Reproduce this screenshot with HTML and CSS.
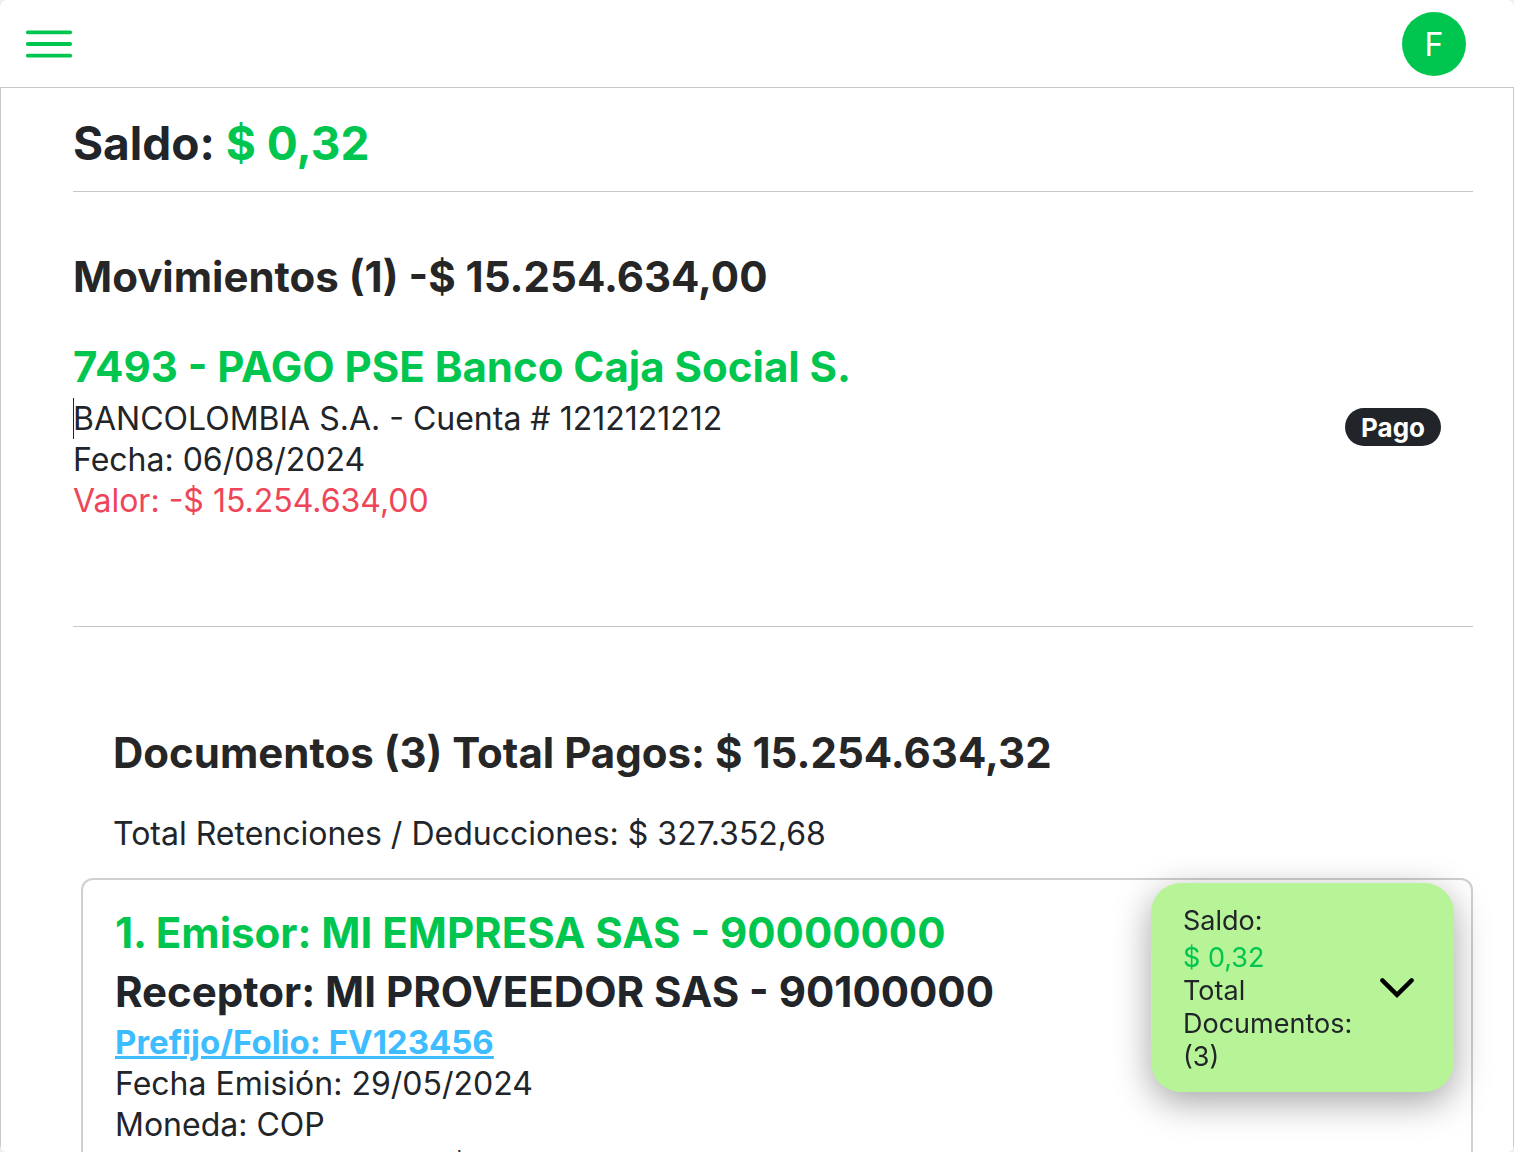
FILE: index.html
```
<!DOCTYPE html>
<html lang="es">
<head>
    <meta charset="UTF-8">
    <meta name="viewport" content="width=device-width, initial-scale=1.0">
    <title>Saldo</title>
    <link rel="stylesheet" href="styles.css">
</head>
<body>

    <div class="app">
        <header class="topbar">
            <button type="button" class="menu-button" aria-label="Menú">
                <svg width="48" height="30" viewBox="0 0 48 30" fill="none" stroke="currentColor" stroke-width="3.8" stroke-linecap="round">
                    <path d="M2.8 3.3H45.2M2.8 15H45.2M2.8 26.7H45.2"/>
                </svg>
            </button>
            <button type="button" class="avatar">F</button>
        </header>

        <main class="content">
            <h1 class="balance">Saldo: <span class="green">$ 0,32</span></h1>

            <section class="movements">
                <h2 class="title">Movimientos (1) -$ 15.254.634,00</h2>
                <div class="movement">
                    <div class="movement-info">
                        <h3 class="title green">7493 - PAGO PSE Banco Caja Social S.</h3>
                        <p class="account">BANCOLOMBIA S.A. - Cuenta # 1212121212</p>
                        <p>Fecha: 06/08/2024</p>
                        <p class="negative">Valor: -$ 15.254.634,00</p>
                    </div>
                    <span class="badge">Pago</span>
                </div>
            </section>

            <section class="documents">
                <div class="documents-header">
                    <h2 class="title">Documentos (3) Total Pagos: $ 15.254.634,32</h2>
                    <p>Total Retenciones / Deducciones: $ 327.352,68</p>
                </div>
                <article class="card">
                    <h3 class="title green">1. Emisor: MI EMPRESA SAS - 90000000</h3>
                    <h3 class="title">Receptor: MI PROVEEDOR SAS - 90100000</h3>
                    <a href="#" class="folio">Prefijo/Folio: FV123456</a>
                    <p>Fecha Emisión: 29/05/2024</p>
                    <p>Moneda: COP</p>
                    <p>Valor del Documento: $ 15.254.634,32</p>
                </article>
            </section>
        </main>

        <aside class="summary">
            <div class="summary-text">
                <p class="summary-label">Saldo:</p>
                <p class="green">$ 0,32</p>
                <p>Total Documentos: (3)</p>
            </div>
            <button type="button" class="summary-toggle" aria-label="Ver detalle">
                <svg width="36" height="22" viewBox="0 0 36 22" fill="none" stroke="currentColor" stroke-width="4.4" stroke-linecap="round" stroke-linejoin="miter">
                    <path d="M3.4 2.4L18 16.8L32.6 2.4"/>
                </svg>
            </button>
        </aside>
    </div>

</body>
</html>
```

FILE: styles.css
```
* {
    box-sizing: border-box;
}
body {
    margin: 0;
    background-color: #efefef;
    font-family: Inter, "Liberation Sans", sans-serif;
    font-size: 32px;
    line-height: 41px;
    color: #212529;
}
h1, h2, h3, p {
    margin: 0;
}
button {
    padding: 0;
    border: none;
    background: none;
    font: inherit;
    cursor: pointer;
}
.app {
    height: 100vh;
    overflow: hidden;
    display: flex;
    flex-direction: column;
    background-color: #fff;
    border-radius: 7px;
}
.green {
    color: #00c650;
}

/* Top bar */
.topbar {
    flex: none;
    display: flex;
    align-items: center;
    justify-content: space-between;
    height: 88px;
    padding: 0 48px 0 25px;
    border-bottom: 1px solid #c8c8cb;
}
.menu-button {
    display: flex;
    color: #00c650;
}
.avatar {
    width: 64px;
    height: 64px;
    padding-top: 2px;
    border-radius: 50%;
    background-color: #00c650;
    color: #fff;
}

/* Content */
.content {
    flex: 1;
    min-height: 0;
    overflow: hidden;
    padding: 26px 40px 0 72px;
    border: 1px solid #c8c8cb;
    border-width: 0 1px;
}
.balance {
    padding-bottom: 19px;
    border-bottom: 1px solid #c8c8cb;
    font-size: 46px;
    line-height: 58px;
}
.title {
    font-size: 42px;
    line-height: 52px;
}
.movements {
    padding: 59px 0 105px;
    border-bottom: 1px solid #c8c8cb;
}
.movements > .title,
.documents-header .title {
    color: #262626;
}
.movement {
    display: flex;
    justify-content: space-between;
    align-items: flex-start;
    margin-top: 38px;
    padding-right: 32px;
}
.movement-info .title {
    margin-bottom: 5px;
}
.account {
    box-shadow: inset 1px 0 #212529;
}
.negative {
    color: #ee4559;
}
.badge {
    margin-top: 67px;
    padding: 1px 16px 0;
    border-radius: 19px;
    background-color: #212529;
    color: #fff;
    font-size: 26px;
    font-weight: 700;
    line-height: 37px;
}

/* Documents */
.documents {
    padding: 100px 0 0 8px;
}
.documents-header {
    padding: 0 32px 24px;
}
.documents-header .title {
    margin-bottom: 34px;
}
.card {
    padding: 27px 32px;
    border: 2px solid #d0d0d0;
    border-radius: 12px;
}
.card .title + .title {
    margin: 7px 0 4px;
}
.folio {
    display: block;
    width: fit-content;
    color: #3dbdff;
    font-size: 33px;
    font-weight: 700;
    text-decoration-thickness: 3px;
}

/* Floating summary */
.summary {
    position: fixed;
    right: 60px;
    bottom: 60px;
    display: flex;
    align-items: center;
    justify-content: space-between;
    width: 303px;
    padding: 21px 39px 19px 32px;
    border-radius: 30px;
    background-color: #b7f397;
    box-shadow: 0 10px 36px rgba(0, 0, 0, 0.36);
    font-size: 27px;
    line-height: 33px;
}
.summary-text {
    width: 180px;
}
.summary-label {
    margin-bottom: 4px;
}
.summary-toggle {
    display: flex;
    color: #000;
}
```
